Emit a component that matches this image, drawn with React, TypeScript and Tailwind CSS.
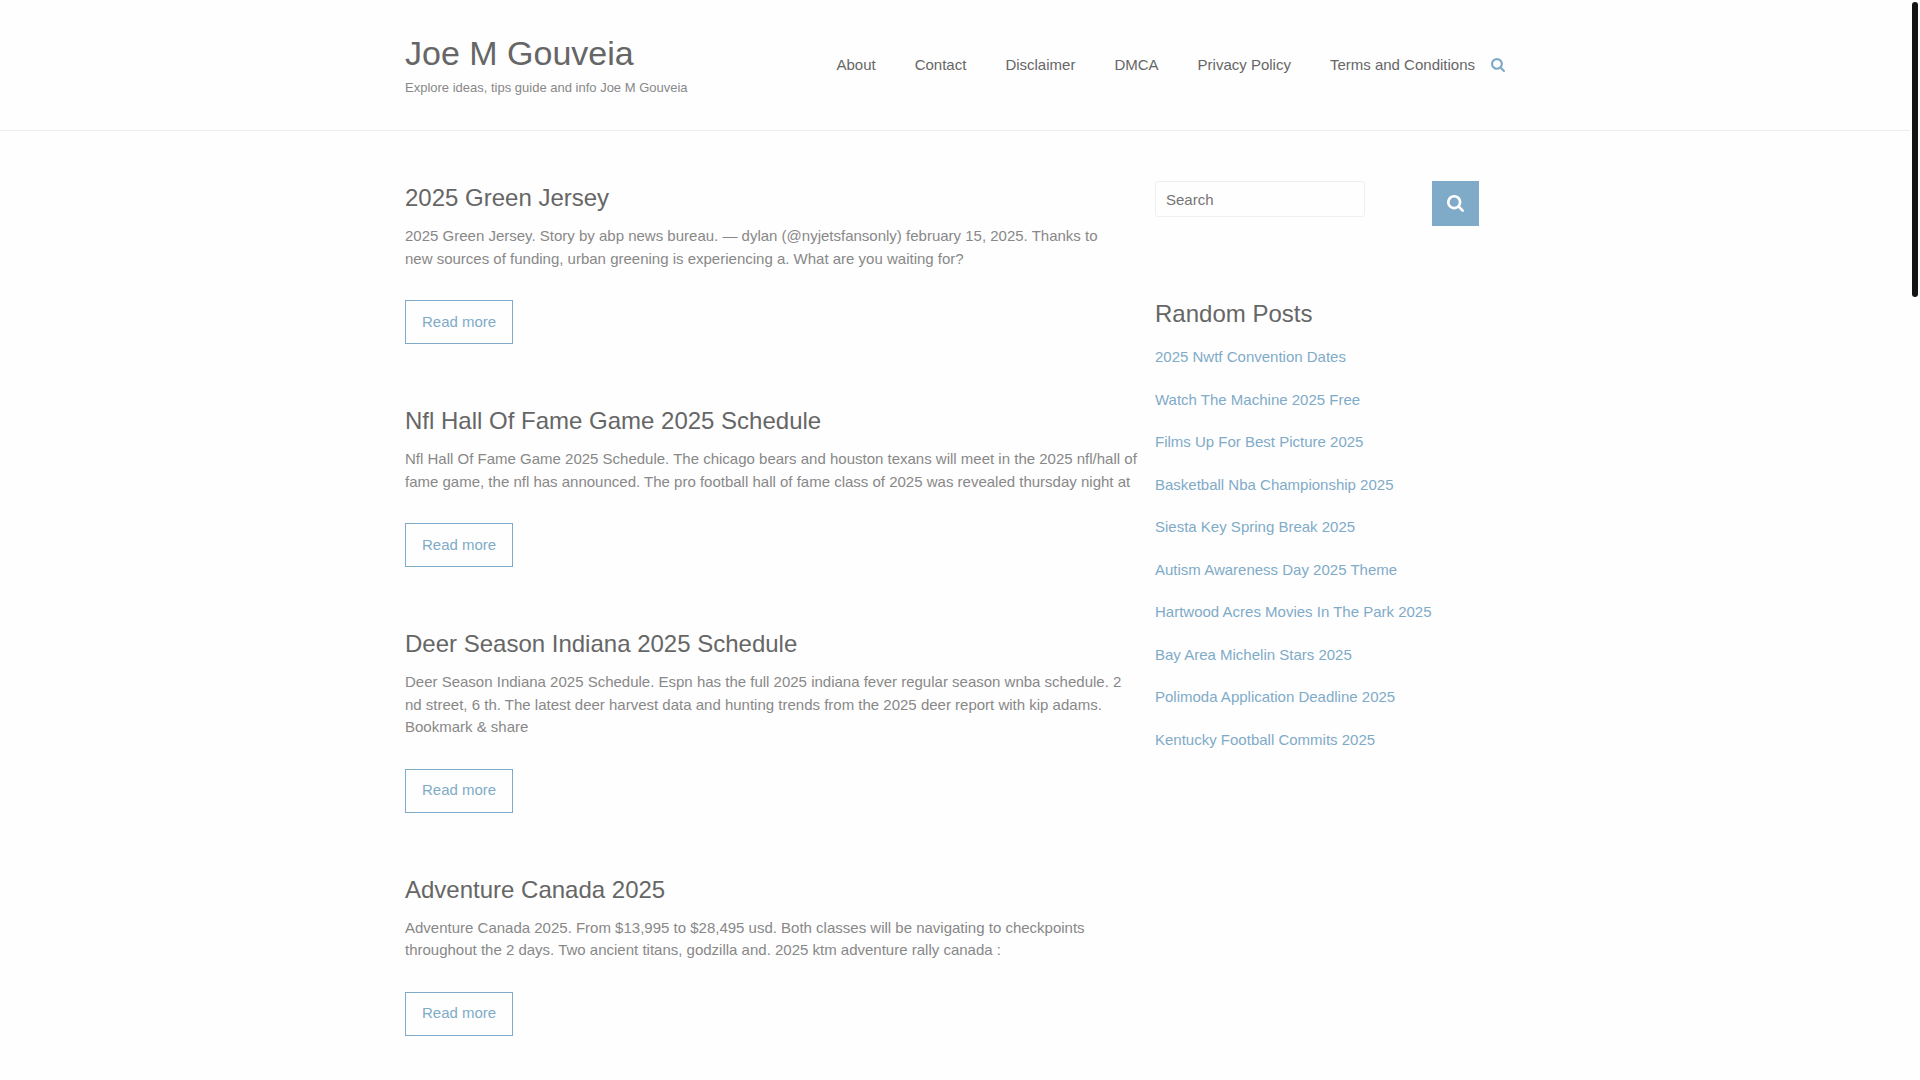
const nav = ["About", "Contact", "Disclaimer", "DMCA", "Privacy Policy", "Terms and Conditions"];

const posts = [
  {
    title: "2025 Green Jersey",
    lines: [
      "2025 Green Jersey. Story by abp news bureau. — dylan (@nyjetsfansonly) february 15, 2025. Thanks to",
      "new sources of funding, urban greening is experiencing a. What are you waiting for?",
    ],
  },
  {
    title: "Nfl Hall Of Fame Game 2025 Schedule",
    lines: [
      "Nfl Hall Of Fame Game 2025 Schedule. The chicago bears and houston texans will meet in the 2025 nfl/hall of",
      "fame game, the nfl has announced. The pro football hall of fame class of 2025 was revealed thursday night at",
    ],
  },
  {
    title: "Deer Season Indiana 2025 Schedule",
    lines: [
      "Deer Season Indiana 2025 Schedule. Espn has the full 2025 indiana fever regular season wnba schedule. 2",
      "nd street, 6 th. The latest deer harvest data and hunting trends from the 2025 deer report with kip adams.",
      "Bookmark & share",
    ],
  },
  {
    title: "Adventure Canada 2025",
    lines: [
      "Adventure Canada 2025. From $13,995 to $28,495 usd. Both classes will be navigating to checkpoints",
      "throughout the 2 days. Two ancient titans, godzilla and. 2025 ktm adventure rally canada :",
    ],
  },
];

const randomPosts = [
  "2025 Nwtf Convention Dates",
  "Watch The Machine 2025 Free",
  "Films Up For Best Picture 2025",
  "Basketball Nba Championship 2025",
  "Siesta Key Spring Break 2025",
  "Autism Awareness Day 2025 Theme",
  "Hartwood Acres Movies In The Park 2025",
  "Bay Area Michelin Stars 2025",
  "Polimoda Application Deadline 2025",
  "Kentucky Football Commits 2025",
];

function SearchIcon({ className }: { className: string }) {
  return (
    <svg viewBox="0 0 1664 1664" className={className} fill="currentColor" aria-hidden="true">
      <path d="M1152 704q0-185-131.500-316.500T704 256 387.500 387.500 256 704t131.500 316.500T704 1152t316.500-131.500T1152 704zm512 832q0 52-38 90t-90 38q-54 0-90-38l-343-342q-179 124-399 124-143 0-273.500-55.500t-225-150-150-225T0 704t55.500-273.500 150-225 225-150T704 0t273.500 55.500 225 150 150 225T1408 704q0 220-124 399l343 343q37 37 37 90z" />
    </svg>
  );
}

export default function App() {
  return (
    <div className="relative h-screen overflow-hidden bg-[#fefefe] pr-[10px] font-['Liberation_Sans',Arial,sans-serif] text-[15px] leading-normal text-[#888888]">
      <header className="border-b border-[#eeeeee]">
        <div className="mx-auto flex h-[130px] max-w-[1100px] items-center justify-between">
          <div>
            <h1 className="text-[34px] leading-[42px] text-[#666666]">
              <a href="#home">Joe M Gouveia</a>
            </h1>
            <p className="mt-1 text-[13px] leading-[20px]">Explore ideas, tips guide and info Joe M Gouveia</p>
          </div>
          <div className="flex items-center gap-4">
            <nav className="flex gap-[39px] text-[#666666]">
              {nav.map((n) => (
                <a key={n} href="#nav">{n}</a>
              ))}
            </nav>
            <button type="button" aria-label="Open search" className="text-[#80abc8]">
              <SearchIcon className="size-[14px]" />
            </button>
          </div>
        </div>
      </header>
      <div className="mx-auto flex max-w-[1100px] gap-[38px] pt-[50px]">
        <main className="w-[712px] shrink-0">
          {posts.map((p) => (
            <article key={p.title} className="mb-[60px]">
              <h2 className="mb-[10px] text-2xl leading-[34px] text-[#666666]">
                <a href="#post">{p.title}</a>
              </h2>
              <p className="whitespace-pre">{p.lines.join("\n")}</p>
              <a
                href="#post"
                className="mt-[30px] flex h-11 w-fit items-center border border-[#80abc8] px-4 text-[#80abc8]"
              >
                Read more
              </a>
            </article>
          ))}
        </main>
        <aside className="w-[324px] shrink-0">
          <form className="flex items-start justify-between">
            <input
              type="text"
              aria-label="Search"
              placeholder="Search"
              className="h-9 w-[210px] rounded-[3px] border border-[#eeeeee] px-[10px] placeholder:text-[#757575]"
            />
            <button
              type="button"
              aria-label="Search"
              className="flex h-[45px] w-[47px] items-center justify-center bg-[#80abc8] text-white"
            >
              <SearchIcon className="size-[17px]" />
            </button>
          </form>
          <h2 className="mt-[70px] text-2xl leading-[36px] text-[#666666]">Random Posts</h2>
          <ul className="mt-[14px]">
            {randomPosts.map((t) => (
              <li key={t} className="mb-5">
                <a href="#post" className="text-[#80abc8]">{t}</a>
              </li>
            ))}
          </ul>
        </aside>
      </div>
      <div className="absolute top-0.5 right-0.5 h-[295px] w-[6px] rounded-full bg-[#141414]" />
    </div>
  );
}
